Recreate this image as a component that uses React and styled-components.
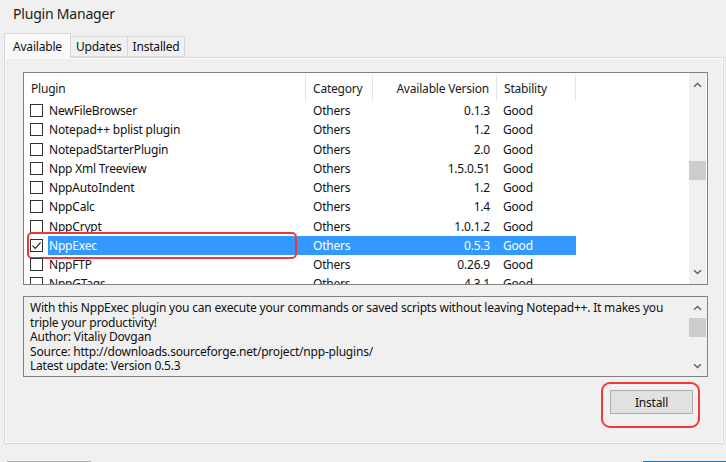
import React from "react";
import styled, { createGlobalStyle } from "styled-components";

const FONT = `"Noto Sans", "Open Sans", "DejaVu Sans", sans-serif`;

const GlobalStyle = createGlobalStyle`
  html, body {
    margin: 0;
    padding: 0;
    background: #f0f0f0;
  }
  body {
    font-family: ${FONT};
    font-size: 12px;
    letter-spacing: -0.2px;
    color: #111;
  }
`;

const plugins = [
  { name: "NewFileBrowser", version: "0.1.3" },
  { name: "Notepad++ bplist plugin", version: "1.2" },
  { name: "NotepadStarterPlugin", version: "2.0" },
  { name: "Npp Xml Treeview", version: "1.5.0.51" },
  { name: "NppAutoIndent", version: "1.2" },
  { name: "NppCalc", version: "1.4" },
  { name: "NppCrypt", version: "1.0.1.2" },
  { name: "NppExec", version: "0.5.3", checked: true, selected: true },
  { name: "NppFTP", version: "0.26.9" },
  { name: "NppGTags", version: "4.3.1" },
];

const description = [
  "With this NppExec plugin you can execute your commands or saved scripts without leaving Notepad++. It makes you",
  "triple your productivity!",
  "Author: Vitaliy Dovgan",
  "Source: http://downloads.sourceforge.net/project/npp-plugins/",
  "Latest update: Version 0.5.3",
];

const Window = styled.div`
  width: 726px;
  height: 462px;
  overflow: hidden;
  display: flex;
  flex-direction: column;
  background: #f0f0f0;
  & > * {
    flex-shrink: 0;
  }
`;

const Title = styled.div`
  height: 33px;
  box-sizing: border-box;
  padding: 4px 0 0 13px;
  font-size: 14px;
  line-height: 20px;
  color: #1a1a1a;
`;

const TabStrip = styled.div`
  display: flex;
  align-items: flex-end;
  height: 24px;
  padding-left: 4px;
  position: relative;
  z-index: 1;
`;

const Tab = styled.div`
  display: flex;
  align-items: center;
  justify-content: center;
  box-sizing: border-box;
  height: ${(p) => (p.$active ? "25px" : "21px")};
  margin-bottom: ${(p) => (p.$active ? "-1px" : "0")};
  padding: 0 ${(p) => (p.$active ? "8px" : "5px")};
  background: ${(p) => (p.$active ? "#f9f9f9" : "#f0f0f0")};
  border: 1px solid #d9d9d9;
  border-bottom: ${(p) => (p.$active ? "none" : "1px solid #d9d9d9")};
  margin-left: ${(p) => (p.$first ? "0" : "-1px")};
  font-size: 12px;
  color: #111;
`;

const Panel = styled.div`
  margin-left: 4px;
  width: 720px;
  box-sizing: border-box;
  border: 1px solid #d9d9d9;
  box-shadow: inset 0 0 0 1px #fbfbfb;
  background: #f0f0f0;
  padding: 14px 15px 15px 18px;
  display: flex;
  flex-direction: column;
`;

const ListBox = styled.div`
  height: 213px;
  flex: none;
  box-sizing: border-box;
  border: 1px solid #828282;
  background: #fff;
  display: flex;
`;

const ListMain = styled.div`
  flex: 1;
  overflow: hidden;
  display: flex;
  flex-direction: column;
`;

const Header = styled.div`
  display: flex;
  height: 28px;
  flex: none;
`;

const HeadCell = styled.div`
  width: ${(p) => p.$w}px;
  box-sizing: border-box;
  display: flex;
  align-items: center;
  justify-content: ${(p) => (p.$right ? "flex-end" : "flex-start")};
  padding: 0 7px;
  margin-top: 2px;
  border-right: 1px solid #e5e5e5;
  color: #1a1a1a;
`;

const Rows = styled.div`
  display: flex;
  flex-direction: column;
`;

const Row = styled.div`
  display: flex;
  align-items: center;
  height: 19.25px;
  flex: none;
  position: relative;
`;

const CheckCell = styled.div`
  width: 24px;
  flex: none;
  display: flex;
  align-items: center;
  padding-left: 6px;
  box-sizing: border-box;
`;

const Box = styled.div`
  width: 13px;
  height: 13px;
  box-sizing: border-box;
  border: 1px solid #333;
  background: #fff;
  display: flex;
  align-items: center;
  justify-content: center;
`;

const RowBody = styled.div`
  display: flex;
  height: 100%;
  align-items: center;
  background: ${(p) => (p.$selected ? "#3399ff" : "transparent")};
  color: ${(p) => (p.$selected ? "#fff" : "#111")};
`;

const Cell = styled.div`
  width: ${(p) => p.$w}px;
  box-sizing: border-box;
  padding: ${(p) => p.$pad || "0 7px"};
  text-align: ${(p) => (p.$right ? "right" : "left")};
  white-space: nowrap;
  overflow: hidden;
  line-height: 19px;
`;

const Callout = styled.div`
  position: absolute;
  left: 3px;
  top: -4px;
  width: 270px;
  height: 27px;
  box-sizing: border-box;
  border: 2px solid #ee3a36;
  border-radius: 5px;
  pointer-events: none;
`;

const ScrollBar = styled.div`
  width: 17px;
  flex: none;
  background: #f0f0f0;
  display: flex;
  flex-direction: column;
  margin-right: 1px;
`;

const ScrollButton = styled.div`
  height: ${(p) => p.$h}px;
  flex: none;
  display: flex;
  align-items: center;
  justify-content: center;
`;

const Track = styled.div`
  flex: 1;
  display: flex;
  flex-direction: column;
`;

const Thumb = styled.div`
  height: ${(p) => p.$h}px;
  margin-top: ${(p) => p.$offset}px;
  background: #cdcdcd;
`;

const DescBox = styled.div`
  margin-top: 11px;
  height: 81px;
  flex: none;
  box-sizing: border-box;
  border: 1px solid #828282;
  background: #f0f0f0;
  display: flex;
`;

const DescText = styled.div`
  flex: 1;
  padding: 4px 6px 0 6px;
  line-height: 14.5px;
  color: #111;
  overflow: hidden;
`;

const DescLine = styled.div`
  white-space: nowrap;
  height: 14.5px;
`;

const ButtonRow = styled.div`
  margin-top: 5px;
  margin-right: 8px;
  display: flex;
  justify-content: flex-end;
`;

const ButtonCallout = styled.div`
  border: 2px solid #ee3a36;
  border-radius: 9px;
  padding: 6px 5px 12px 7px;
`;

const Button = styled.button`
  width: 83px;
  height: 24px;
  box-sizing: border-box;
  border: 1px solid #adadad;
  background: #e1e1e1;
  font-family: ${FONT};
  font-size: 12px;
  letter-spacing: -0.2px;
  color: #111;
  padding: 0;
`;

const Footer = styled.div`
  margin-top: 17px;
  display: flex;
  justify-content: space-between;
  padding-left: 7px;
`;

const FooterButton = styled.div`
  width: ${(p) => p.$w}px;
  height: 23px;
  box-sizing: border-box;
  border: 1px solid ${(p) => (p.$primary ? "#0078d7" : "#adadad")};
  background: #e1e1e1;
`;

const Chevron = ({ down }) => (
  <svg width="9" height="6" viewBox="0 0 9 6">
    <path
      d={down ? "M1 1.2 L4.5 4.6 L8 1.2" : "M1 4.8 L4.5 1.4 L8 4.8"}
      fill="none"
      stroke="#606060"
      strokeWidth="1.4"
    />
  </svg>
);

const Check = () => (
  <svg width="11" height="11" viewBox="0 0 11 11">
    <path d="M1.5 5.6 L4.2 8.3 L9.6 2.4" fill="none" stroke="#222" strokeWidth="1.2" />
  </svg>
);

const VScroll = ({ btn, thumb, offset }) => (
  <ScrollBar>
    <ScrollButton $h={btn}>
      <Chevron />
    </ScrollButton>
    <Track>
      <Thumb $h={thumb} $offset={offset} />
    </Track>
    <ScrollButton $h={btn}>
      <Chevron down />
    </ScrollButton>
  </ScrollBar>
);

const columns = [
  { label: "Plugin", w: 282 },
  { label: "Category", w: 67 },
  { label: "Available Version", w: 124, right: true },
  { label: "Stability", w: 79 },
];

const App = () => (
  <Window>
    <GlobalStyle />
    <Title>Plugin Manager</Title>
    <TabStrip>
      <Tab $active $first>Available</Tab>
      <Tab>Updates</Tab>
      <Tab>Installed</Tab>
    </TabStrip>
    <Panel>
      <ListBox>
        <ListMain>
          <Header>
            {columns.map((c) => (
              <HeadCell key={c.label} $w={c.w} $right={c.right}>
                {c.label}
              </HeadCell>
            ))}
          </Header>
          <Rows>
            {plugins.map((p) => (
              <Row key={p.name}>
                <CheckCell>
                  <Box>{p.checked && <Check />}</Box>
                </CheckCell>
                <RowBody $selected={p.selected}>
                  <Cell $w={258} $pad="0 1px">
                    {p.name}
                  </Cell>
                  <Cell $w={67}>Others</Cell>
                  <Cell $w={124} $right>
                    {p.version}
                  </Cell>
                  <Cell $w={79} $pad="0 6px">
                    Good
                  </Cell>
                </RowBody>
                {p.selected && <Callout />}
              </Row>
            ))}
          </Rows>
        </ListMain>
        <VScroll btn={24} thumb={19} offset={64} />
      </ListBox>
      <DescBox>
        <DescText>
          {description.map((line) => (
            <DescLine key={line}>{line}</DescLine>
          ))}
        </DescText>
        <VScroll btn={21} thumb={19} offset={0} />
      </DescBox>
      <ButtonRow>
        <ButtonCallout>
          <Button>Install</Button>
        </ButtonCallout>
      </ButtonRow>
    </Panel>
    <Footer>
      <FooterButton $w={84} />
      <FooterButton $w={83} $primary />
    </Footer>
  </Window>
);

export default App;
